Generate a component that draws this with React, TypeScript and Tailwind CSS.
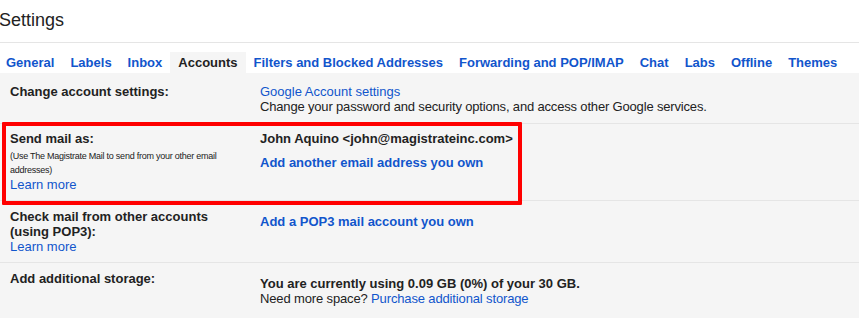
import React from "react";

const tabs = [
  "General",
  "Labels",
  "Inbox",
  "Accounts",
  "Filters and Blocked Addresses",
  "Forwarding and POP/IMAP",
  "Chat",
  "Labs",
  "Offline",
  "Themes",
];

export default function App() {
  return (
    <div className="relative w-[859px] h-[335px] overflow-hidden bg-white font-['Liberation_Sans',Arial,sans-serif] text-[13px] text-[#222]">
      <h1 className="h-[42px] pt-[8px] ml-[-1px] text-[18px] leading-[24px] font-normal">
        Settings
      </h1>
      <div className="border-t border-[#e5e5e5] pt-[9px]">
        <div className="flex h-[21px] ml-[-2px]">
          {tabs.map((t) => (
            <div
              key={t}
              className={
                t === "Accounts"
                  ? "px-2 font-bold leading-[21px] whitespace-nowrap bg-[#f5f5f5] text-[#222]"
                  : "px-2 font-bold leading-[21px] whitespace-nowrap text-[#15c]"
              }
            >
              {t}
            </div>
          ))}
        </div>
      </div>

      <div className="bg-[#f5f5f5] leading-[15px]">
        {/* change account settings */}
        <div className="flex h-[51px] pt-[11px] border-b border-[#e5e5e5]">
          <div className="w-[260px] pl-[10px] font-bold">Change account settings:</div>
          <div>
            <div className="text-[#15c]">Google Account settings</div>
            <div className="tracking-[-0.17px]">
              Change your password and security options, and access other Google services.
            </div>
          </div>
        </div>

        {/* send mail as */}
        <div className="flex h-[77px] pt-[7px] border-b border-[#e5e5e5]">
          <div className="w-[260px] pl-[10px]">
            <div className="font-bold">Send mail as:</div>
            <div className="mt-[3px] w-[230px] text-[9px] leading-[14px] tracking-[-0.25px]">
              (Use The Magistrate Mail to send from your other email addresses)
            </div>
            <div className="text-[#15c]">Learn more</div>
          </div>
          <div>
            <div className="font-bold">John Aquino &lt;john@magistrateinc.com&gt;</div>
            <div className="mt-[9px] font-bold text-[#15c]">
              Add another email address you own
            </div>
          </div>
        </div>

        {/* pop3 */}
        <div className="flex h-[62px] pt-[8px] border-b border-[#e5e5e5]">
          <div className="w-[260px] pl-[10px]">
            <div className="font-bold">
              Check mail from other accounts
              <br />
              (using POP3):
            </div>
            <div className="text-[#15c]">Learn more</div>
          </div>
          <div className="pt-[5px] font-bold text-[#15c]">Add a POP3 mail account you own</div>
        </div>

        {/* storage */}
        <div className="flex h-[55px] pt-[8px]">
          <div className="w-[260px] pl-[10px] font-bold">Add additional storage:</div>
          <div className="pt-[5px]">
            <div className="font-bold">You are currently using 0.09 GB (0%) of your 30 GB.</div>
            <div className="tracking-[-0.14px]">
              Need more space? <span className="text-[#15c]">Purchase additional storage</span>
            </div>
          </div>
        </div>
      </div>

      {/* annotation box */}
      <div className="absolute left-[2px] top-[122px] w-[520px] h-[83px] border-4 border-[#ff0000] rounded-[1px]" />
    </div>
  );
}
